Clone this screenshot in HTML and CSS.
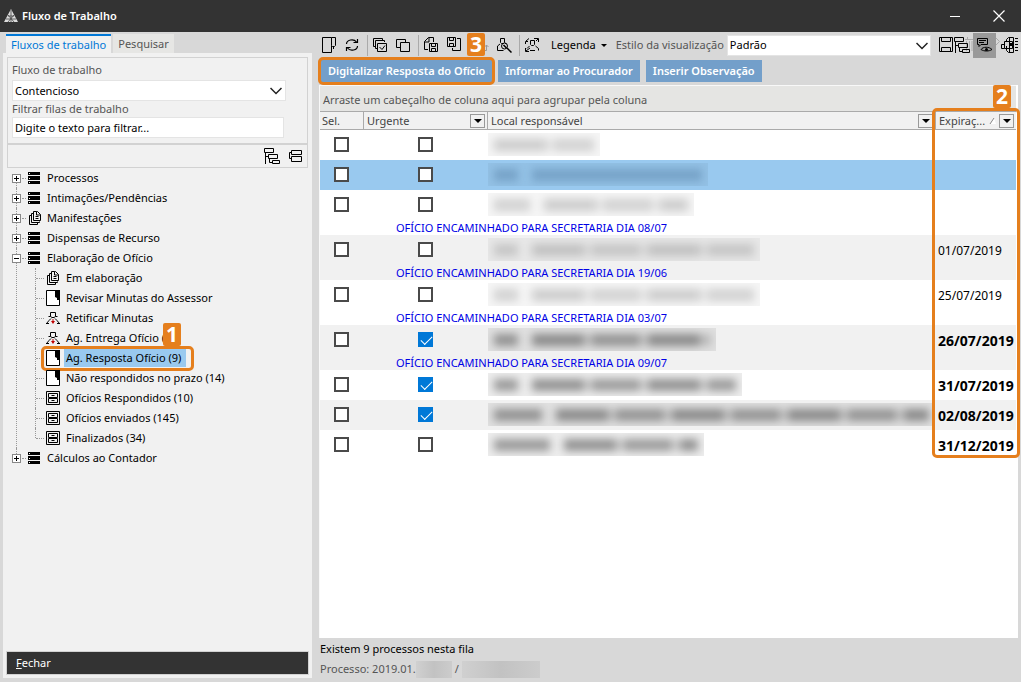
FILE: index.html
```html
<!DOCTYPE html>
<html lang="pt-BR">
<head>
<meta charset="utf-8">
<title>Fluxo de Trabalho</title>
<link rel="stylesheet" href="styles.css">
</head>
<body>
<svg class="sprite" aria-hidden="true">
  <symbol id="stack" viewBox="0 0 12 12"><path d="M0 0h12v3H0zM0 4h12v4H0zM0 9h12v3H0z"/><path d="M1 1h1v1H1zM1 6h1v1H1zM1 10h1v1H1z" fill="#fff"/></symbol>
  <symbol id="docs" viewBox="0 0 14 14"><g fill="none" stroke="#000"><path d="M3.500 4.500h-2v9h8v-2M5 2.500H3.500v9h8v-1M8.500.5h-3v9h7v-6l-3-3h-1v3.500h4M7.500 5.500h3M7.500 7.500h3"/></g></symbol>
  <symbol id="note" viewBox="0 0 14 16"><path d="M.5.500h13v15H.5z" fill="#fff" stroke="#000"/><path d="M9 0h5v7l-1 1v2h-2V8L9 7z"/></symbol>
  <symbol id="person" viewBox="0 0 14 14"><path d="M4.500 1.500h5v4l-1.500 1h-2l-1.500-1zM2.500 5.500h2M9.500 5.500h2M5 7.500L3 9.500l-2.500 3M9 7.500l2 2 2.500 3M0 12.500h3M11 12.500h3" fill="none" stroke="#000"/><path d="M6.500 8h1v2h1.500l-2 3-2-3h1.500z" fill="#c00000"/></symbol>
  <symbol id="cabinet" viewBox="0 0 14 14"><path d="M.5.500h13v13H.5zM2.500 2.500h9v4h-9zM2.500 7.500h9v4h-9zM5.500 4.500h3M5.500 9.500h3" fill="none" stroke="#000"/></symbol>
  <symbol id="tree" viewBox="0 0 16 16"><path d="M.5.500h9v4h-9zM4.500 6.500h9v4h-9zM8.500 12.500h7v3h-7zM1.500 5v11M1.500 8.500h3M5.500 10v4.500h3" fill="none" stroke="#000"/></symbol>
  <symbol id="collapse" viewBox="0 0 13 12"><path d="M2.500.5h10v4h-10zM2.500 6.500h10v5h-10zM2 2.500H.500v6H2" fill="none" stroke="#000"/></symbol>
  <symbol id="down" viewBox="0 0 12 8"><path d="M.5 1l5.500 5.500L11.500 1" fill="none" stroke="#222" stroke-width="1.500"/></symbol>
</svg>

<div class="window">
  <header class="titlebar">
    <svg class="logo" viewBox="0 0 14 14"><path d="M7 0l7 13H0z" fill="#ddd"/><path d="M7 1v12M4 6l6 7M10 6l-6 7M4 7h6M2 10h10" stroke="#444" stroke-width=".8"/></svg>
    <h1>Fluxo de Trabalho</h1>
    <button class="win-btn" aria-label="Minimizar"><svg width="12" height="12"><path d="M1 6.500h10" stroke="#fff"/></svg></button>
    <button class="win-btn" aria-label="Fechar janela"><svg width="12" height="12"><path d="M.5.500l11 11M11.500.5l-11 11" stroke="#fff" stroke-width="1.200"/></svg></button>
  </header>

  <div class="body">
    <aside class="side">
      <nav class="tabs">
        <button class="tab active">Fluxos de trabalho</button>
        <button class="tab">Pesquisar</button>
      </nav>
      <div class="panel">
        <div class="filters">
          <label for="fluxo">Fluxo de trabalho</label>
          <div class="combo"><select id="fluxo"><option>Contencioso</option></select><svg class="chev"><use href="#down"/></svg></div>
          <label for="filtro">Filtrar filas de trabalho</label>
          <input id="filtro" class="textbox" type="text" value="Digite o texto para filtrar...">
        </div>
        <div class="tree-tools">
          <button aria-label="Expandir"><svg width="16" height="16"><use href="#tree"/></svg></button>
          <button aria-label="Recolher"><svg width="13" height="12"><use href="#collapse"/></svg></button>
        </div>
        <ul class="tree">
          <li><div class="node"><button class="exp" aria-label="Expandir"></button><svg><use href="#stack"/></svg><span>Processos</span></div></li>
          <li><div class="node"><button class="exp" aria-label="Expandir"></button><svg><use href="#stack"/></svg><span>Intimações/Pendências</span></div></li>
          <li><div class="node docs"><button class="exp" aria-label="Expandir"></button><svg><use href="#docs"/></svg><span>Manifestações</span></div></li>
          <li><div class="node"><button class="exp" aria-label="Expandir"></button><svg><use href="#stack"/></svg><span>Dispensas de Recurso</span></div></li>
          <li><div class="node"><button class="exp open" aria-label="Recolher"></button><svg><use href="#stack"/></svg><span>Elaboração de Ofício</span></div>
            <ul class="sub">
              <li><svg><use href="#docs"/></svg><span>Em elaboração</span></li>
              <li><svg class="tall"><use href="#note"/></svg><span>Revisar Minutas do Assessor</span></li>
              <li><svg><use href="#person"/></svg><span>Retificar Minutas</span></li>
              <li><svg><use href="#person"/></svg><span>Ag. Entrega Ofício (17)</span></li>
              <li><svg class="tall"><use href="#note"/></svg><span class="selected">Ag. Resposta Ofício (9)</span><i class="mark mark-item"></i><b class="step step-1">1</b></li>
              <li><svg class="tall"><use href="#note"/></svg><span>Não respondidos no prazo (14)</span></li>
              <li><svg><use href="#cabinet"/></svg><span>Ofícios Respondidos (10)</span></li>
              <li><svg><use href="#cabinet"/></svg><span>Ofícios enviados (145)</span></li>
              <li><svg><use href="#cabinet"/></svg><span>Finalizados (34)</span></li>
            </ul>
          </li>
          <li><div class="node"><button class="exp" aria-label="Expandir"></button><svg><use href="#stack"/></svg><span>Cálculos ao Contador</span></div></li>
        </ul>
        <button class="close"><u>F</u>echar</button>
      </div>
    </aside>

    <main class="main">
      <div class="toolbar">
        <button aria-label="Nota"><svg width="16" height="16" viewBox="0 0 16 16"><path d="M10.500.5H1.500v15h9V8.500M10.500.5h4v8l-1 1h-2l-1-1zM12.500 10v2" fill="none" stroke="#000"/></svg></button>
        <button aria-label="Atualizar"><svg width="16" height="16" viewBox="0 0 16 16"><path d="M2.500 7c0-4 7-6 10-2M9.500 5.500h4V2M13.500 9c0 4-7 6-10 2M6.500 10.500h-4V14" fill="none" stroke="#000" stroke-width="1.200"/></svg></button>
        <i class="sep"></i>
        <button aria-label="Marcar todos"><svg width="16" height="16" viewBox="0 0 16 16"><path d="M4 9.500H1.500v-8h9V4M5 11.500H3.500v-8h9V5M5.500 6.500h9v8h-9zM7.500 10l2.500 2.500 3-4" fill="none" stroke="#000"/></svg></button>
        <button aria-label="Desmarcar todos"><svg width="16" height="16" viewBox="0 0 16 16"><path d="M5 10.500H1.500v-8h9V5M5.500 5.500h9v9h-9z" fill="none" stroke="#000"/></svg></button>
        <i class="sep"></i>
        <button aria-label="Salvar documento"><svg width="16" height="16" viewBox="0 0 16 16"><path d="M5 12.500H1.500v-8l4-4h5V5M6 .500V5H1.500M6.500 6.500h8v8h-8zM8.500 6.500v3h4v-3M8.500 14.500v-3h4v3" fill="none" stroke="#000"/></svg></button>
        <button aria-label="Importar"><svg width="16" height="16" viewBox="0 0 16 16"><path d="M1.500.5h8v9h-8zM3.500.500v3h4v-3M3.500 9.500v-3h4v3M11 1.500h3.500v12h-8V11" fill="none" stroke="#000"/></svg></button>
        <button class="moved" aria-label="Mover"><svg width="20" height="16" viewBox="0 0 20 16"><path d="M14 13.500h3.500V8M15.500 10l2-2 2 2" fill="none" stroke="#999"/></svg><b class="step step-3">3</b></button>
        <button aria-label="Localizar pessoa"><svg width="16" height="16" viewBox="0 0 16 16"><path d="M4.500 1.500h4v4l-1 1h-2l-1-1zM4 7L1.500 9v4.500h6M9 6l1.500 1" fill="none" stroke="#000"/><circle cx="8.500" cy="9" r="3" fill="none" stroke="#000"/><path d="M11 11l4.500 4.500M7.500 8l3 3" stroke="#000" stroke-width="1.500"/></svg></button>
        <i class="sep"></i>
        <button aria-label="Trocar pessoa"><svg width="16" height="16" viewBox="0 0 16 16"><path d="M1.500 7V4.500H4M2 4l3-2.500M10 1.500h4.500V5M14 2l-2 2M6.500 3.500h4v4l-1 1h-2l-1-1zM5.500 9L3 11.500M11.500 9l3 2.500v2M6 13.500h5M1.500 11v3.500H5M2 14l4-3" fill="none" stroke="#000"/></svg></button>
        <button class="legend">Legenda <span class="caret"></span></button>
        <label for="estilo">Estilo da visualização</label>
        <div class="combo grow"><select id="estilo"><option>Padrão</option></select><svg class="chev"><use href="#down"/></svg></div>
        <div class="views">
          <button aria-label="Painel"><svg width="15" height="16" viewBox="0 0 15 16"><path d="M.5.500h13v14H.5zM2.500.5v4h9v-4M2.500 14.500v-4h9v4" fill="none" stroke="#000"/></svg></button>
          <button aria-label="Hierarquia"><svg width="19" height="16" viewBox="0 0 19 16"><path d="M11 2.500h8M13.500 0v2M12.500 4v10M15.500 4v10M18 4v10" stroke="#aaa" fill="none"/><use href="#tree" width="16" height="16"/></svg></button>
          <button class="pressed" aria-label="Visualizar observações"><svg width="17" height="16" viewBox="0 0 17 16"><path d="M1.500 1.500h10v6H5l-2 2v-2H1.500zM3 3.500h7M3 5.500h5M5 12.500c2-3 8-3 11 0-3 2-8 2-11 0z" fill="none" stroke="#000"/><circle cx="10.500" cy="12.500" r="1.500"/></svg></button>
          <button aria-label="Imprimir"><svg width="22" height="16" viewBox="0 0 22 16"><path d="M0 1l3.500 3.500L0 8" fill="none" stroke="#aaa"/><g transform="translate(5)"><path d="M3.500 4.500h8v7h-8zM.5 7.500h3M.5 11.500v-4M.5 11.500h3M5.500 4V2.500l2-2h5v15h-5l-2-2V9M8.500 1v14M14 1.500h3M14 4.500h3M14 7.500h3M14 10.500h3M14 13.500h3" fill="none" stroke="#000"/><path d="M9 6h3v3H9z"/></g></svg></button>
        </div>
      </div>

      <div class="actions">
        <button>Digitalizar Resposta do Ofício<i class="mark mark-action"></i></button>
        <button>Informar ao Procurador</button>
        <button>Inserir Observação</button>
      </div>

      <section class="grid">
        <p class="group">Arraste um cabeçalho de coluna aqui para agrupar pela coluna</p>
        <table>
          <colgroup><col class="c-sel"><col class="c-urg"><col><col class="c-exp"></colgroup>
          <thead><tr>
            <th>Sel.</th>
            <th><div>Urgente<button class="drop" aria-label="Filtrar urgente"></button></div></th>
            <th><div>Local responsável<button class="drop" aria-label="Filtrar local"></button></div></th>
            <th><div>Expiraç...<svg width="8" height="8" class="sort"><path d="M1 7l4-6 2 6z" fill="#fff"/><path d="M1 7l4-6" stroke="#888"/></svg><button class="drop" aria-label="Filtrar expiração"></button></div></th>
          </tr></thead>
          <tbody><tr><td><input type="checkbox" aria-label="Selecionar"></td><td><input type="checkbox" aria-label="Urgente"></td><td><div class="redact w112"><i class="full"></i></div></td><td></td></tr></tbody>
          <tbody class="current"><tr><td><input type="checkbox" aria-label="Selecionar"></td><td><input type="checkbox" aria-label="Urgente"></td><td><div class="redact w220"><i class="w24"></i><i class="full"></i></div></td><td></td></tr></tbody>
          <tbody><tr><td><input type="checkbox" aria-label="Selecionar"></td><td><input type="checkbox" aria-label="Urgente"></td><td><div class="redact w206"><i class="w36"></i><i class="full"></i></div></td><td></td></tr>
            <tr class="obs"><td></td><td colspan="3">OFÍCIO ENCAMINHADO PARA SECRETARIA DIA 08/07</td></tr></tbody>
          <tbody class="alt"><tr><td><input type="checkbox" aria-label="Selecionar"></td><td><input type="checkbox" aria-label="Urgente"></td><td><div class="redact w272"><i class="w24"></i><i class="full"></i></div></td><td>01/07/2019</td></tr>
            <tr class="obs"><td></td><td colspan="3">OFÍCIO ENCAMINHADO PARA SECRETARIA DIA 19/06</td></tr></tbody>
          <tbody><tr><td><input type="checkbox" aria-label="Selecionar"></td><td><input type="checkbox" aria-label="Urgente"></td><td><div class="redact w272"><i class="w24"></i><i class="full"></i></div></td><td>25/07/2019</td></tr>
            <tr class="obs"><td></td><td colspan="3">OFÍCIO ENCAMINHADO PARA SECRETARIA DIA 03/07</td></tr></tbody>
          <tbody class="alt urgent"><tr><td><input type="checkbox" aria-label="Selecionar"></td><td><input type="checkbox" checked aria-label="Urgente"></td><td><div class="redact w228"><i class="w24"></i><i class="full"></i></div></td><td>26/07/2019</td></tr>
            <tr class="obs"><td></td><td colspan="3">OFÍCIO ENCAMINHADO PARA SECRETARIA DIA 09/07</td></tr></tbody>
          <tbody class="urgent"><tr><td><input type="checkbox" aria-label="Selecionar"></td><td><input type="checkbox" checked aria-label="Urgente"></td><td><div class="redact w254"><i class="w24"></i><i class="full"></i></div></td><td>31/07/2019</td></tr></tbody>
          <tbody class="alt urgent"><tr><td><input type="checkbox" aria-label="Selecionar"></td><td><input type="checkbox" checked aria-label="Urgente"></td><td><div class="redact"><i class="w48"></i><i class="full"></i></div></td><td>02/08/2019</td></tr></tbody>
          <tbody class="urgent"><tr><td><input type="checkbox" aria-label="Selecionar"></td><td><input type="checkbox" aria-label="Urgente"></td><td><div class="redact w216"><i class="w56"></i><i class="full"></i></div></td><td>31/12/2019</td></tr></tbody>
        </table>
        <i class="mark mark-col"></i><b class="step step-2">2</b>
      </section>

      <footer class="status">
        <p>Existem 9 processos nesta fila</p>
        <p class="proc">Processo: 2019.01.<span class="smudge w36"></span>&nbsp;/&nbsp;<span class="smudge w78"></span></p>
      </footer>
    </main>
  </div>
</div>
</body>
</html>
```
FILE: styles.css
```css
* { box-sizing: border-box; }
body { margin: 0; font: 11px/16px "Noto Sans", "Open Sans", sans-serif; color: #000; background: #d8d8d8; }
button, input, select { font: inherit; color: inherit; margin: 0; border: 0; padding: 0; background: none; }
h1, p, ul { margin: 0; padding: 0; list-style: none; }
svg { display: block; flex: none; }
.sprite { position: absolute; width: 0; height: 0; }
.window { min-height: 100vh; display: flex; flex-direction: column; }

.titlebar { height: 32px; display: flex; align-items: center; background: #333; color: #fff; padding-left: 4px; }
.logo { width: 14px; height: 14px; }
.titlebar h1 { flex: 1; margin-left: 4px; font-size: 11px; font-weight: 600; }
.win-btn { width: 44px; height: 32px; display: grid; place-items: center; }

.body { flex: 1; display: flex; gap: 7px; padding: 0 3px 4px; }
.side { width: 309px; display: flex; flex-direction: column; padding-top: 2px; }
.tabs { display: flex; gap: 2px; padding-left: 3px; }
.tab { height: 19px; padding: 0 5px; color: #555; background: #e6e6e4; }
.tab.active { color: #0078d7; background: #f1f1f1; border-top: 2px solid #0078d7; line-height: 14px; }
.panel { flex: 1; display: flex; flex-direction: column; padding: 4px; background: #f1f1f1; }
.filters { border: 1px solid #d2d2d2; height: 87px; padding: 4px 21px 0 4px; }
.filters label { display: block; color: #555; line-height: 16px; }
.combo { position: relative; height: 21px; background: #fff; border: 1px solid #e4e4e4; }
.combo select { appearance: none; width: 100%; height: 100%; padding-left: 2px; }
.chev { position: absolute; right: 3px; top: 6px; width: 12px; height: 8px; pointer-events: none; }
.filters .combo { margin-top: 2px; }
.textbox { display: block; width: calc(100% - 2px); height: 21px; padding: 0 2px; background: #fff; border: 1px solid #e4e4e4; }
.tree-tools { height: 24px; display: flex; align-items: center; justify-content: flex-end; gap: 9px; padding-right: 5px; border: 1px solid #d2d2d2; }

.tree { flex: 1; padding-left: 5px; }
.tree > li { position: relative; }
.tree > li::before { content: ""; position: absolute; left: 4px; top: 0; bottom: 0; border-left: 1px dotted #999; }
.tree > li:first-child::before { top: 10px; }
.tree > li:last-child::before { bottom: 10px; }
.node { display: flex; align-items: center; height: 20px; }
.node::before { content: ""; order: 1; width: 4px; margin: 0 2px 0 1px; border-top: 1px dotted #999; }
.node > svg { order: 2; width: 12px; height: 12px; }
.node.docs > svg { width: 14px; height: 14px; margin-right: -2px; }
.node > span { order: 3; margin-left: 7px; }
.exp { position: relative; width: 9px; height: 9px; border: 1px solid #888; background: linear-gradient(#000, #000) center / 5px 1px no-repeat, linear-gradient(#000, #000) center / 1px 5px no-repeat, #fff; }
.exp.open { background: linear-gradient(#000, #000) center / 5px 1px no-repeat, #fff; }
.sub { margin-left: 23px; }
.sub li { position: relative; display: flex; align-items: center; height: 20px; border-left: 1px dotted #999; }
.sub li:last-child { border-color: transparent; }
.sub li:last-child::after { content: ""; position: absolute; left: -1px; top: 0; height: 10px; border-left: 1px dotted #999; }
.sub li::before { content: ""; width: 8px; margin-right: 2px; border-top: 1px dotted #999; }
.sub svg { width: 14px; height: 14px; }
.sub svg.tall { height: 16px; }
.sub span { margin-left: 4px; padding: 0 2px; line-height: 18px; }
.sub .selected { background: #99c9ef; padding-right: 5px; }
.close { height: 22px; padding: 0 9px; text-align: left; color: #fff; background: #333; outline: 1px solid #d2d2d2; }

.mark { position: absolute; border: 3px solid #e57f1d; border-radius: 5px; pointer-events: none; }
.mark-item { left: 5px; top: -2px; width: 153px; height: 25px; }
.step { position: absolute; z-index: 2; width: 18px; height: 23px; border-radius: 2px; background: #e57f1d; color: #fff; font: 700 21px/23px "Open Sans", "Noto Sans", sans-serif; text-align: center; }
.step-1 { left: 127px; top: -25px; }

.main { flex: 1; min-width: 0; display: flex; flex-direction: column; }
.toolbar { height: 26px; display: flex; align-items: center; padding-left: 2px; }
.toolbar > button { height: 24px; display: flex; align-items: center; margin-right: 7px; }
.sep { width: 1px; height: 21px; margin-right: 4px; background: #aaa; }
.toolbar .moved { position: relative; }
.step-3 { left: -2px; top: 0; }
.toolbar .legend { margin: 0 9px 0 4px; gap: 5px; }
.caret { border: 3px solid transparent; border-top-color: #000; border-bottom: 0; }
.toolbar label { color: #555; margin-right: 3px; }
.grow { flex: 1; }
.toolbar .chev { right: 2px; }
.views { display: flex; align-items: center; margin-left: 8px; }
.views button { display: grid; place-items: center; height: 25px; }
.views .pressed { width: 23px; background: #999; }

.actions { display: flex; gap: 6px; padding: 2px 0 3px 2px; }
.actions button { position: relative; height: 22px; padding: 0 7px; color: #fff; background: #739fca; font-weight: 600; }
.mark-action { inset: -3px -3px; }

.grid { position: relative; flex: 1; padding-right: 2px; background: #fff; border-left: 1px solid #f8f8f8; }
.group { height: 26px; padding: 6px 3px 0; color: #555; background: #e5e5e3; border-top: 1px solid #f8f8f8; }
table { width: 100%; table-layout: fixed; border-collapse: collapse; }
.c-sel { width: 43px; }
.c-urg { width: 124px; }
.c-exp { width: 81px; }
th { height: 18px; padding: 0 2px; font-weight: 400; text-align: left; color: #444; background: #f1f1f1; border: solid #aaa; border-width: 1px 0; }
th + th { box-shadow: inset 1px 0 #aaa; padding-left: 4px; }
th div { display: flex; align-items: center; }
.drop { width: 15px; height: 14px; margin-left: auto; border: 1px solid #999; display: grid; place-items: center; }
.drop::after { content: ""; border: 4px solid transparent; border-top-color: #000; border-bottom: 0; }
.sort { margin-left: 4px; }
td { height: 30px; padding: 0 2px; }
td:nth-child(-n+2) { text-align: center; }
td:nth-child(3) { padding: 0 0 0 1px; }
td:last-child { padding: 2px 0 0 3px; font-size: 12px; white-space: nowrap; }
td input { appearance: none; display: block; width: 15px; height: 15px; margin: 0 auto; background: #fff; border: 2px solid #4a4a4a; }
td:first-child input { margin-left: 12px; }
td input:checked { border: 0; background: #0078d7; position: relative; }
td input:checked::after { content: ""; position: absolute; left: 3px; top: 4px; width: 10px; height: 5px; border: solid #fff; border-width: 0 0 1px 1px; transform: rotate(-45deg); }
.alt { background: #f1f1f1; }
.current { background: #99c9ef; }
.urgent td:last-child { font-size: 14px; font-weight: 700; }
.obs td, .obs td:last-child, .urgent .obs td:last-child { height: 15px; padding: 0 0 0 33px; font-size: 11px; font-weight: 400; line-height: 15px; text-align: left; color: #0000e6; }
.mark-col { right: -2px; top: 23px; width: 88px; height: 350px; }
.step-2 { right: 7px; top: 0; }
.redact { display: flex; align-items: center; gap: 14px; height: 23px; padding: 0 6px; overflow: hidden; background: rgba(0, 0, 0, .04); }
.redact i { height: 12px; background: rgba(0, 0, 0, .14); filter: blur(4px); }
.redact .full { flex: 1; background: repeating-linear-gradient(90deg, rgba(0, 0, 0, .16) 0 52px, rgba(0, 0, 0, .06) 52px 60px, rgba(0, 0, 0, .14) 60px 108px, rgba(0, 0, 0, .05) 108px 116px); }
.current .redact i { background: rgba(30, 70, 110, .25); }
.urgent .redact { background: rgba(0, 0, 0, .07); }
.urgent .redact i { background: rgba(0, 0, 0, .35); }
.urgent .redact .full { background: repeating-linear-gradient(90deg, rgba(0, 0, 0, .38) 0 52px, rgba(0, 0, 0, .14) 52px 60px, rgba(0, 0, 0, .34) 60px 108px, rgba(0, 0, 0, .12) 108px 116px); }
.w24 { width: 24px; }
.w36 { width: 36px; }
.w48 { width: 48px; }
.w56 { width: 56px; }
.w78 { width: 78px; }
.w112 { width: 112px; }
.w206 { width: 206px; }
.w216 { width: 216px; }
.w220 { width: 220px; }
.w228 { width: 228px; }
.w254 { width: 254px; }
.w272 { width: 272px; }

.status { padding: 3px 1px 0; height: 40px; }
.proc { display: flex; align-items: center; height: 24px; color: #555; }
.smudge { height: 17px; background: linear-gradient(90deg, #d0d0d0, #c2c2c2, #ccc); }
```
